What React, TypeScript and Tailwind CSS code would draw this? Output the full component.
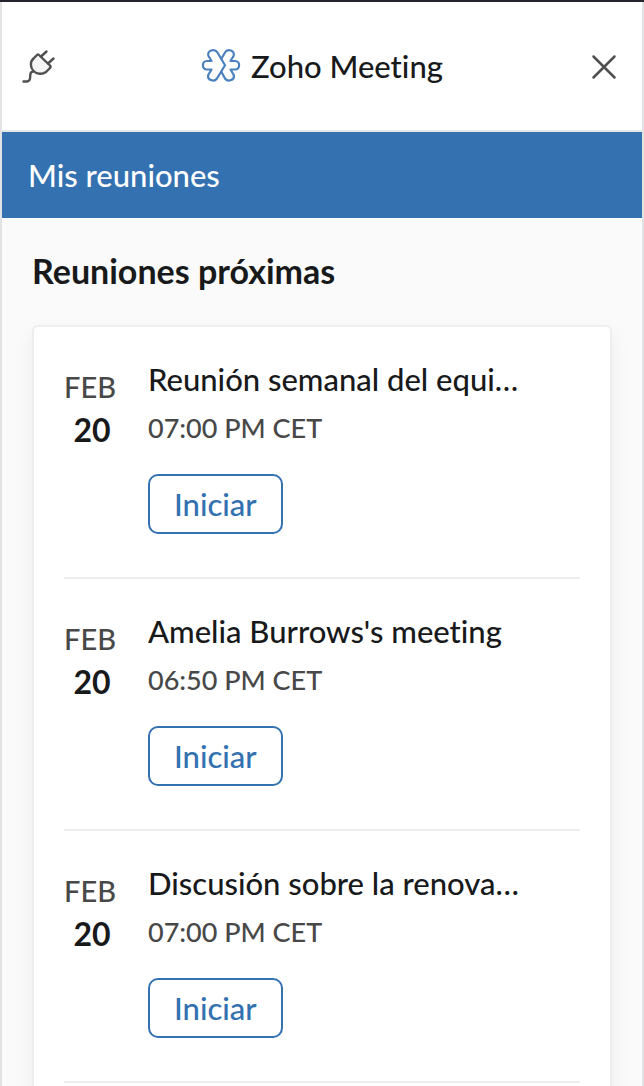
import React from "react";

const meetings = [{
  month: "FEB",
  day: "20",
  title: "Reunión semanal del equi…",
  time: "07:00 PM CET"
}, {
  month: "FEB",
  day: "20",
  title: "Amelia Burrows's meeting",
  time: "06:50 PM CET"
}, {
  month: "FEB",
  day: "20",
  title: "Discusión sobre la renova…",
  time: "07:00 PM CET"
}];

const PlugIcon = () => <svg width="36" height="36" viewBox="0 0 36 36" fill="none" stroke="#505050" strokeWidth="2.400" strokeLinecap="round" strokeLinejoin="round">
    <path d="M17 7 28 17.500C29 18.500 28.500 19.500 27.500 20.500L24 24C20 27 14.500 26 11.500 23C8 19.500 8 13.500 11.500 10.500L15 7Q16 6 17 7Z" fill="#f5f5f5" />
    <path d="M19 8.500 24.500 3.500M26 15.500 31.500 10.500" />
    <path d="M11 23.500C5 24.500 11.500 32.500 5 33.500H1.500" />
  </svg>;

const ZohoMeetingIcon = () => <svg width="40" height="36" viewBox="0 0 40 36" fill="none" stroke="#4a80bd" strokeWidth="2.200" strokeLinecap="round" strokeLinejoin="round">
    <path d="M24 17.200 16.500 4.500C13.500 0 5.500 2.500 7.500 8L10.500 13H6C.500 13 .500 21.500 6 21.500H10.500L7.500 26.500C5.500 32 13 34.500 16 30.500L24 17.200" />
    <path d="M20.500 10.500 24 4.500C26.500 0 34.500 2.500 32.500 8L29.500 13H34C39.500 13 39.500 21.500 34 21.500H29.500L32.500 26.500C34.500 32 27 34.500 24 30.500L20.500 24" />
  </svg>;

export default function App() {
  return <div className="h-screen flex flex-col overflow-hidden border-t-2 border-[#252530] font-['Lato',sans-serif] font-medium [font-variant-ligatures:none] text-[#18191b]">
      <div className="flex-1 min-h-0 flex flex-col border-x-2 border-[#e2e3e5]">
        <header className="shrink-0 h-[130px] flex items-center justify-between px-5 bg-white border-b-2 border-[#e5e6e8]">
          <button aria-label="Conectar">
            <PlugIcon />
          </button>
          <h1 className="flex items-center gap-[10px] text-[31px] leading-10">
            <ZohoMeetingIcon />
            Zoho Meeting
          </h1>
          <button aria-label="Cerrar" className="p-1">
            <svg width="28" height="28" viewBox="0 0 28 28" fill="none" stroke="#505050" strokeWidth="2.500" strokeLinecap="round">
              <path d="M3.500 4.500 24.500 25.500M24.500 4.500 3.500 25.500" />
            </svg>
          </button>
        </header>
        <div className="shrink-0 h-[86px] flex items-center px-[26px] bg-[#3471b1] text-white text-[31px] leading-10">
          Mis reuniones
        </div>
        <main className="flex-1 min-h-0 overflow-hidden px-[30px] pt-8 bg-[#fafafa]">
          <h2 className="text-[34px] leading-[42px] font-bold">Reuniones próximas</h2>
          <ul className="mt-[33px] px-[30px] pb-8 bg-white border-2 border-[#eeeeee] rounded-md shadow-[0_8px_20px_rgba(0,0,0,0.06)]">
            {meetings.map(item => <li key={item.title} className="flex gap-7 pt-8 pb-[43px] border-b-2 border-[#eeeeee]">
                <div className="w-14 pt-2">
                  <div className="text-[29px] leading-10 text-[#484848]">{item.month}</div>
                  <div className="mt-[3px] text-[32px] leading-10 font-bold text-center">{item.day}</div>
                </div>
                <div className="flex-1 min-w-0">
                  <h3 className="text-[31px] leading-10 truncate">{item.title}</h3>
                  <p className="mt-[9px] text-[27px] leading-10 text-[#484848]">{item.time}</p>
                  <button className="mt-[26px] h-[60px] px-6 border-2 border-[#3471b1] rounded-[10px] text-[31px] leading-10 text-[#3471b1]">
                    Iniciar
                  </button>
                </div>
              </li>)}
          </ul>
        </main>
      </div>
    </div>;
}
